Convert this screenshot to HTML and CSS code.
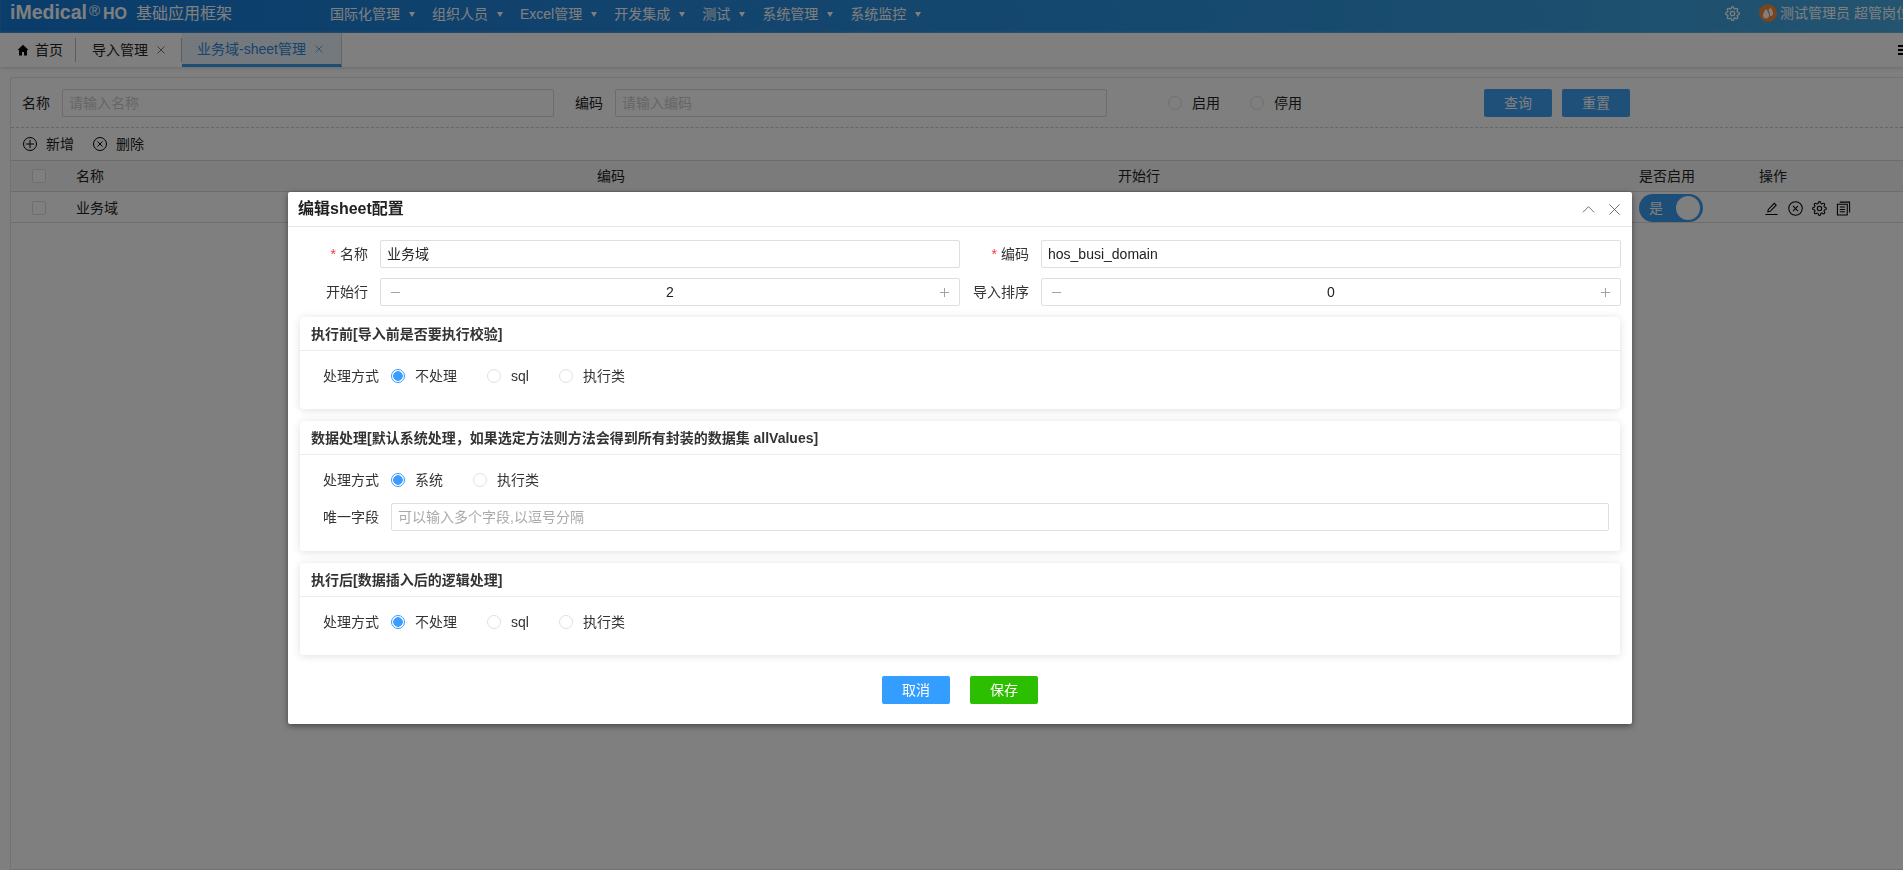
FILE: index.html
```html
<!DOCTYPE html>
<html lang="zh-CN">
<head>
<meta charset="utf-8">
<title>业务域-sheet管理</title>
<link rel="stylesheet" href="styles.css">
</head>
<body>
<div class="page">
  <header class="topbar">
    <div class="brand"><span class="brand-name">iMedical</span><span class="brand-reg">®</span><span class="brand-ho">HO</span><span class="brand-title">基础应用框架</span></div>
    <nav class="menu">
      <span class="menu-item">国际化管理<i class="caret"></i></span>
      <span class="menu-item">组织人员<i class="caret"></i></span>
      <span class="menu-item">Excel管理<i class="caret"></i></span>
      <span class="menu-item">开发集成<i class="caret"></i></span>
      <span class="menu-item">测试<i class="caret"></i></span>
      <span class="menu-item">系统管理<i class="caret"></i></span>
      <span class="menu-item">系统监控<i class="caret"></i></span>
    </nav>
    <div class="user">
      <svg class="user-gear" viewBox="0 0 24 24"><circle cx="12" cy="12" r="3.5"/><path d="M19.4 15a1.65 1.65 0 0 0 .33 1.82l.06.06a2 2 0 0 1 0 2.83 2 2 0 0 1-2.83 0l-.06-.06a1.65 1.65 0 0 0-1.82-.33 1.65 1.65 0 0 0-1 1.51V21a2 2 0 0 1-2 2 2 2 0 0 1-2-2v-.09A1.65 1.65 0 0 0 9 19.4a1.65 1.65 0 0 0-1.82.33l-.06.06a2 2 0 0 1-2.83 0 2 2 0 0 1 0-2.83l.06-.06a1.65 1.65 0 0 0 .33-1.82 1.65 1.65 0 0 0-1.51-1H3a2 2 0 0 1-2-2 2 2 0 0 1 2-2h.09A1.65 1.65 0 0 0 4.6 9a1.65 1.65 0 0 0-.33-1.82l-.06-.06a2 2 0 0 1 0-2.83 2 2 0 0 1 2.83 0l.06.06a1.65 1.65 0 0 0 1.82.33H9a1.65 1.65 0 0 0 1-1.51V3a2 2 0 0 1 2-2 2 2 0 0 1 2 2v.09a1.65 1.65 0 0 0 1 1.51 1.65 1.65 0 0 0 1.82-.33l.06-.06a2 2 0 0 1 2.83 0 2 2 0 0 1 0 2.83l-.06.06a1.65 1.65 0 0 0-.33 1.82V9a1.65 1.65 0 0 0 1.51 1H21a2 2 0 0 1 2 2 2 2 0 0 1-2 2h-.09a1.65 1.65 0 0 0-1.51 1z"/></svg>
      <svg class="avatar" viewBox="0 0 18 18"><circle cx="9" cy="9" r="9" fill="#f08a3c"/><path d="M7 5c1.500 2 3 4 3 6.500a3 3 0 0 1-6 0C4 9.500 5.500 7 7 5z" fill="#fff"/><path d="M11.500 3.500c1.200 1.800 2.500 3.800 2.500 6a2.500 2.500 0 0 1-3 2.500c.3-2.500-.6-4.500-1.500-6z" fill="#fff"/></svg>
      <span class="user-name">测试管理员 超管岗位(管理员)</span>
    </div>
  </header>

  <div class="tabs">
    <div class="tab tab-home">
      <svg class="home-icon" viewBox="0 0 12 12"><path d="M6 .8 .5 6H2v5.500h3V8h2v3.500h3V6h1.500z"/></svg>首页
    </div>
    <div class="tab tab-plain">导入管理<svg class="tab-x" viewBox="0 0 8 8"><path d="M.5.5l7 7M7.500.5l-7 7"/></svg></div>
    <div class="tab tab-active">业务域-sheet管理<svg class="tab-x" viewBox="0 0 8 8"><path d="M.5.5l7 7M7.500.5l-7 7"/></svg></div>
    <div class="tabs-more"><i></i><i></i><i></i></div>
  </div>

  <main class="content">
    <section class="panel">
      <form class="search">
        <label class="search-label">名称</label>
        <input class="search-input" placeholder="请输入名称">
        <label class="search-label search-label-2">编码</label>
        <input class="search-input" placeholder="请输入编码">
        <span class="search-radio search-radio-1"><i class="radio"></i>启用</span>
        <span class="search-radio search-radio-2"><i class="radio"></i>停用</span>
        <span class="btn btn-query">查询</span>
        <span class="btn btn-reset">重置</span>
      </form>
      <div class="toolbar">
        <span class="tool"><svg viewBox="0 0 14 14"><circle cx="7" cy="7" r="6.500"/><path d="M7 2.800v8.400M2.800 7h8.400"/></svg>新增</span>
        <span class="tool"><svg viewBox="0 0 14 14"><circle cx="7" cy="7" r="6.500"/><path d="M4.500 4.500l5 5M9.500 4.500l-5 5"/></svg>删除</span>
      </div>
      <div class="grid-row grid-head">
        <span><i class="check"></i></span><span>名称</span><span>编码</span><span>开始行</span><span>是否启用</span><span>操作</span>
      </div>
      <div class="grid-row grid-body">
        <span><i class="check"></i></span><span>业务域</span><span></span><span></span>
        <span class="switch"><b>是</b><i></i></span>
        <span class="ops">
          <svg viewBox="0 0 16 16"><path d="M4 11.500 4.600 9 11 2.500l2 2L6.600 11zM1.500 14.500h13"/></svg>
          <svg viewBox="0 0 16 16"><circle cx="8" cy="8" r="7.200"/><path d="M5.300 5.300l5.400 5.400M10.700 5.300l-5.400 5.400"/></svg>
          <svg viewBox="0 0 24 24" class="op-gear"><circle cx="12" cy="12" r="3.500"/><path d="M19.4 15a1.65 1.65 0 0 0 .33 1.82l.06.06a2 2 0 0 1 0 2.83 2 2 0 0 1-2.83 0l-.06-.06a1.65 1.65 0 0 0-1.82-.33 1.65 1.65 0 0 0-1 1.51V21a2 2 0 0 1-2 2 2 2 0 0 1-2-2v-.09A1.65 1.65 0 0 0 9 19.4a1.65 1.65 0 0 0-1.82.33l-.06.06a2 2 0 0 1-2.83 0 2 2 0 0 1 0-2.83l.06-.06a1.65 1.65 0 0 0 .33-1.82 1.65 1.65 0 0 0-1.51-1H3a2 2 0 0 1-2-2 2 2 0 0 1 2-2h.09A1.65 1.65 0 0 0 4.6 9a1.65 1.65 0 0 0-.33-1.82l-.06-.06a2 2 0 0 1 0-2.83 2 2 0 0 1 2.83 0l.06.06a1.65 1.65 0 0 0 1.82.33H9a1.65 1.65 0 0 0 1-1.51V3a2 2 0 0 1 2-2 2 2 0 0 1 2 2v.09a1.65 1.65 0 0 0 1 1.51 1.65 1.65 0 0 0 1.82-.33l.06-.06a2 2 0 0 1 2.83 0 2 2 0 0 1 0 2.83l-.06.06a1.65 1.65 0 0 0-.33 1.82V9a1.65 1.65 0 0 0 1.51 1H21a2 2 0 0 1 2 2 2 2 0 0 1-2 2h-.09a1.65 1.65 0 0 0-1.51 1z"/></svg>
          <svg viewBox="0 0 16 16"><path d="M1.500 3.500h10.500v11.500H1.500zM4 1.200h10.500v11M4 6.500h5.500M4 9h5.500M4 11.500h5.500"/></svg>
        </span>
      </div>
    </section>
  </main>
</div>

<div class="mask"></div>

<section class="modal">
  <div class="modal-head">
    <h2 class="modal-title">编辑sheet配置</h2>
    <svg class="modal-icon" viewBox="0 0 14 14"><path d="M1 10 7 4l6 6"/></svg>
    <svg class="modal-icon" viewBox="0 0 14 14"><path d="M1.500 1.500l11 11M12.500 1.500l-11 11"/></svg>
  </div>
  <div class="form-grid">
    <label class="form-label"><em>*</em>名称</label>
    <div class="field">业务域</div>
    <label class="form-label"><em>*</em>编码</label>
    <div class="field">hos_busi_domain</div>
    <label class="form-label">开始行</label>
    <div class="field number"><svg viewBox="0 0 12 12"><path d="M1 6h10"/></svg><span>2</span><svg viewBox="0 0 12 12"><path d="M1 6h10M6 1v10"/></svg></div>
    <label class="form-label">导入排序</label>
    <div class="field number"><svg viewBox="0 0 12 12"><path d="M1 6h10"/></svg><span>0</span><svg viewBox="0 0 12 12"><path d="M1 6h10M6 1v10"/></svg></div>
  </div>

  <div class="card">
    <h3 class="card-title">执行前[导入前是否要执行校验]</h3>
    <div class="card-body">
      <div class="opt-row">
        <label class="opt-label">处理方式</label>
        <span class="opt"><i class="radio on"></i>不处理</span>
        <span class="opt"><i class="radio"></i>sql</span>
        <span class="opt"><i class="radio"></i>执行类</span>
      </div>
    </div>
  </div>

  <div class="card card-tall">
    <h3 class="card-title">数据处理[默认系统处理，如果选定方法则方法会得到所有封装的数据集 allValues]</h3>
    <div class="card-body">
      <div class="opt-row">
        <label class="opt-label">处理方式</label>
        <span class="opt"><i class="radio on"></i>系统</span>
        <span class="opt"><i class="radio"></i>执行类</span>
      </div>
      <div class="opt-row opt-row-input">
        <label class="opt-label">唯一字段</label>
        <input class="unique-input" placeholder="可以输入多个字段,以逗号分隔">
      </div>
    </div>
  </div>

  <div class="card">
    <h3 class="card-title">执行后[数据插入后的逻辑处理]</h3>
    <div class="card-body">
      <div class="opt-row">
        <label class="opt-label">处理方式</label>
        <span class="opt"><i class="radio on"></i>不处理</span>
        <span class="opt"><i class="radio"></i>sql</span>
        <span class="opt"><i class="radio"></i>执行类</span>
      </div>
    </div>
  </div>

  <div class="modal-foot">
    <span class="foot-btn cancel">取消</span>
    <span class="foot-btn save">保存</span>
  </div>
</section>
</body>
</html>
```

FILE: styles.css
```css
* { box-sizing: border-box; }
html, body { margin: 0; height: 100%; overflow: hidden; }
body {
  font-family: "Liberation Sans", "Noto Sans CJK SC", sans-serif;
  font-size: 14px;
  line-height: 20px;
  color: #222;
  background: #fff;
}
i { font-style: normal; display: block; }
input { font: inherit; outline: none; }
input::placeholder { color: #aaa; opacity: 1; }

.page { height: 870px; display: flex; flex-direction: column; }

/* top bar */
.topbar {
  height: 33px;
  flex: none;
  display: flex;
  align-items: flex-start;
  background: linear-gradient(90deg, #147ad6 0%, #2488dc 35%, #2f96dc 70%, #46a8e0 100%);
  color: #fff;
  overflow: hidden;
  box-shadow: inset 0 -1px 2px rgba(255,255,255,.25);
}
.brand { width: 330px; flex: none; display: flex; align-items: baseline; padding: 2px 0 0 10px; white-space: nowrap; }
.brand-name { font-size: 19.500px; font-weight: 700; line-height: 20px; width: 79px; }
.brand-reg { font-size: 15px; width: 14px; position: relative; top: -3px; }
.brand-ho { font-size: 16px; font-weight: 700; width: 33px; }
.brand-title { font-size: 16px; }
.menu { display: flex; padding-top: 4px; }
.menu-item { display: flex; align-items: center; height: 20px; margin-right: 17px; white-space: nowrap; }
.caret { width: 0; height: 0; margin: 1px 0 0 9px; border-left: 3.500px solid transparent; border-right: 3.500px solid transparent; border-top: 5px solid #fff; }
.user { position: absolute; left: 1725px; top: 3px; right: 0; display: flex; align-items: center; height: 20px; overflow: hidden; white-space: nowrap; }
.user-gear { width: 15px; height: 15px; fill: none; stroke: #fff; stroke-width: 2; flex: none; }
.avatar { width: 18px; height: 18px; margin-left: 19px; flex: none; }
.user-name { margin-left: 3px; }

/* tabs */
.tabs {
  height: 34px;
  flex: none;
  display: flex;
  align-items: stretch;
  position: relative;
  background: #fff;
  box-shadow: 0 1px 4px rgba(0,0,0,.18);
}
.tab { display: flex; align-items: center; white-space: nowrap; position: relative; }
.tab-home { width: 76px; padding-left: 17px; }
.tab-plain { width: 106px; padding-left: 16px; }
.tab-home::after, .tab-plain::after { content: ""; position: absolute; right: 0; top: 5px; bottom: 5px; border-right: 1px solid #bbb; }
.home-icon { width: 12px; height: 12px; margin-right: 6px; fill: #000; }
.tab-x { width: 8px; height: 8px; margin-left: 9px; fill: none; stroke: #777; stroke-width: 1; }
.tab-active { width: 160px; padding-left: 15px; color: #2f86d8; background: #e9f2fb; border-bottom: 3px solid #3b9cf0; border-right: 1px solid #ccc; }
.tab-active .tab-x { stroke: #6aa3dc; }
.tabs-more { position: absolute; right: -3px; top: 12px; width: 8px; display: flex; flex-direction: column; gap: 2px; }
.tabs-more i { height: 2px; background: #000; }

/* list page */
.content { flex: 1; padding: 10px 0 0 10px; background: #fff; }
.panel { height: 100%; border: 1px solid #e4e4e4; border-right: 0; border-radius: 3px 0 0 0; }
.search { height: 50px; display: flex; align-items: center; padding: 1px 0 0 11px; border-bottom: 1px dashed #ccc; }
.search-label { width: 28px; margin-right: 12px; flex: none; }
.search-label-2 { margin-left: 21px; }
.search-input { width: 492px; height: 28px; padding: 0 6px; border: 1px solid #d9d9d9; border-radius: 2px; flex: none; color: #222; }
.search-input::placeholder { color: #ccc; }
.search-radio { display: flex; align-items: center; gap: 10px; }
.search-radio-1 { margin-left: 61px; }
.search-radio-2 { margin-left: 30px; }
.btn { width: 68px; height: 28px; margin-left: 10px; display: flex; align-items: center; justify-content: center; background: #3ea0f5; color: #fff; border-radius: 2px; flex: none; }
.btn-query { margin-left: 182px; }

.toolbar { height: 32px; display: flex; align-items: center; padding-left: 12px; gap: 19px; }
.tool { display: flex; align-items: center; gap: 9px; }
.tool svg { width: 14px; height: 14px; fill: none; stroke: #000; stroke-width: 1; }

.grid-row { display: grid; grid-template-columns: 65px 521px 521px 521px 120px 1fr; align-items: center; border-top: 1px solid #d8d8d8; }
.grid-head { height: 31px; background: #f6f6f6; }
.grid-body { height: 32px; padding-top: 2px; border-bottom: 1px solid #ddd; }
.check { width: 14px; height: 14px; margin-left: 21px; border: 1px solid #ddd; border-radius: 2px; background: #fff; }
.switch { width: 64px; height: 28px; border-radius: 14px; background: #3b9cf0; color: #fff; display: flex; align-items: center; padding: 0 3px 0 10px; justify-content: space-between; }
.switch b { font-weight: 400; }
.switch i { width: 24px; height: 24px; border-radius: 50%; background: #fff; }
.ops { display: flex; align-items: center; gap: 9px; padding-left: 5px; }
.ops svg { width: 15px; height: 15px; fill: none; stroke: #000; stroke-width: 1.100; flex: none; }
.ops .op-gear { stroke-width: 1.700; }

/* overlay */
.mask { position: fixed; inset: 0; background: rgba(0,0,0,.5); }

/* modal */
.modal {
  position: absolute;
  left: 288px;
  top: 192px;
  width: 1344px;
  height: 532px;
  background: #fff;
  border-radius: 2px;
  box-shadow: 0 2px 6px rgba(0,0,0,.45);
  padding: 0 12px;
}
.modal-head { height: 35px; margin: 0 -12px; padding: 0 11px 0 10px; display: flex; align-items: center; gap: 13px; border-bottom: 1px solid #e6e6e6; }
.modal-title { margin: 0 auto 0 0; font-size: 16px; font-weight: 700; color: #222; line-height: 22px; }
.modal-icon { width: 13px; height: 13px; fill: none; stroke: #666; stroke-width: 1; }

.form-grid { display: grid; grid-template-columns: 68px 580px 57px 580px; column-gap: 12px; row-gap: 10px; padding-top: 13px; margin-bottom: 11px; }
.form-grid .form-label { text-align: right; line-height: 28px; color: #333; white-space: nowrap; }
.form-label em { color: #f33; font-style: normal; margin-right: 4px; }
.field { height: 28px; border: 1px solid #dcdfe6; border-radius: 2px; padding: 0 6px; line-height: 26px; color: #222; }
.number { display: flex; align-items: center; justify-content: space-between; padding: 0 9px 0 9px; }
.number svg { width: 11px; height: 11px; fill: none; stroke: #999; stroke-width: 1; }

.card { height: 92px; margin-bottom: 12px; border-radius: 4px; background: #fff; box-shadow: 0 1px 8px rgba(0,0,0,.13); }
.card-tall { height: 130px; }
.card-title { margin: 0; height: 34px; line-height: 35px; padding-left: 11px; font-size: 14px; font-weight: 700; color: #333; border-bottom: 1px solid #e8ecf4; }
.card-body { padding-top: 13px; }
.opt-row { display: flex; align-items: center; height: 24px; }
.opt-label { width: 56px; margin: 0 12px 0 23px; flex: none; color: #333; }
.opt { display: flex; align-items: center; gap: 10px; margin-right: 30px; color: #333; }
.radio { width: 14px; height: 14px; border: 1px solid #dcdfe6; border-radius: 50%; background: #fff; flex: none; }
.radio.on { border-color: #3a9dff; background: radial-gradient(circle, #3a9dff 0 4.500px, #fff 5px); }
.opt-row-input { height: 28px; margin-top: 11px; }
.unique-input { width: 1218px; height: 28px; border: 1px solid #dcdfe6; border-radius: 2px; padding: 0 6px; color: #222; }

.modal-foot { display: flex; justify-content: center; gap: 20px; padding-top: 9px; }
.foot-btn { width: 68px; height: 28px; border-radius: 2px; color: #fff; display: flex; align-items: center; justify-content: center; }
.cancel { background: #339eff; }
.save { background: #2bbf00; }
```
